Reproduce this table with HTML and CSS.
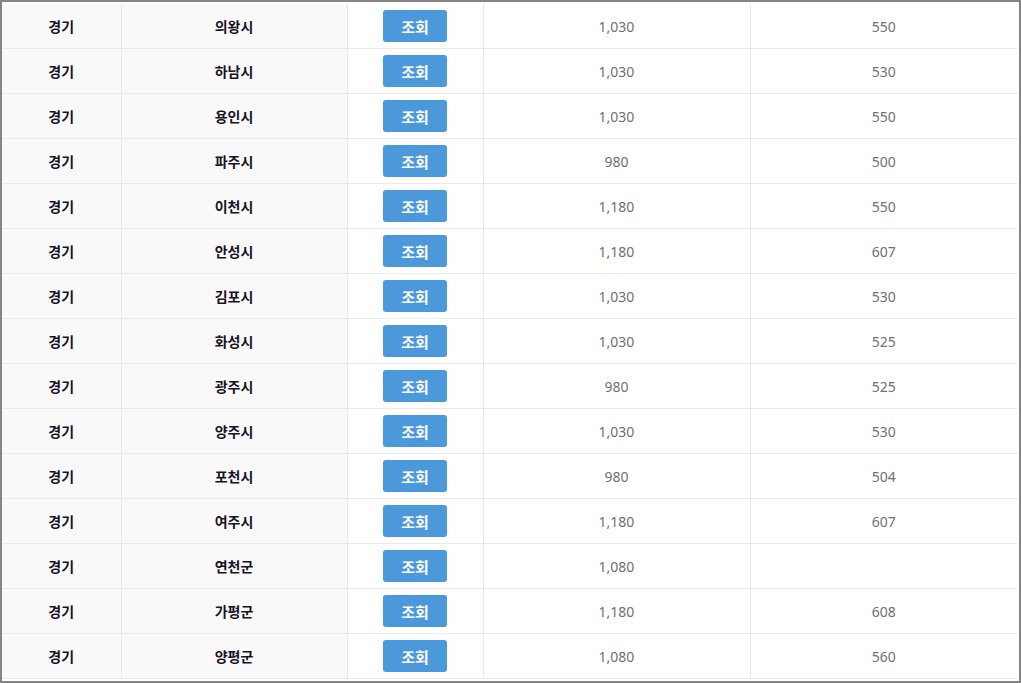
FILE: index.html
```html
<!DOCTYPE html>
<html lang="ko">
<head>
    <meta charset="UTF-8">
    <meta name="viewport" content="width=device-width, initial-scale=1.0">
    <title>지역별 요금 조회</title>
    <link rel="stylesheet" href="styles.css">
</head>
<body>
    <div class="frame">
        <table class="fee-table">
            <colgroup>
                <col class="col-area">
                <col class="col-city">
                <col class="col-btn">
                <col class="col-num">
                <col class="col-num2">
            </colgroup>
            <tbody>
                <tr><td class="area">경기</td><td class="city">의왕시</td><td><button class="lookup">조회</button></td><td class="num">1,030</td><td class="num">550</td></tr>
                <tr><td class="area">경기</td><td class="city">하남시</td><td><button class="lookup">조회</button></td><td class="num">1,030</td><td class="num">530</td></tr>
                <tr><td class="area">경기</td><td class="city">용인시</td><td><button class="lookup">조회</button></td><td class="num">1,030</td><td class="num">550</td></tr>
                <tr><td class="area">경기</td><td class="city">파주시</td><td><button class="lookup">조회</button></td><td class="num">980</td><td class="num">500</td></tr>
                <tr><td class="area">경기</td><td class="city">이천시</td><td><button class="lookup">조회</button></td><td class="num">1,180</td><td class="num">550</td></tr>
                <tr><td class="area">경기</td><td class="city">안성시</td><td><button class="lookup">조회</button></td><td class="num">1,180</td><td class="num">607</td></tr>
                <tr><td class="area">경기</td><td class="city">김포시</td><td><button class="lookup">조회</button></td><td class="num">1,030</td><td class="num">530</td></tr>
                <tr><td class="area">경기</td><td class="city">화성시</td><td><button class="lookup">조회</button></td><td class="num">1,030</td><td class="num">525</td></tr>
                <tr><td class="area">경기</td><td class="city">광주시</td><td><button class="lookup">조회</button></td><td class="num">980</td><td class="num">525</td></tr>
                <tr><td class="area">경기</td><td class="city">양주시</td><td><button class="lookup">조회</button></td><td class="num">1,030</td><td class="num">530</td></tr>
                <tr><td class="area">경기</td><td class="city">포천시</td><td><button class="lookup">조회</button></td><td class="num">980</td><td class="num">504</td></tr>
                <tr><td class="area">경기</td><td class="city">여주시</td><td><button class="lookup">조회</button></td><td class="num">1,180</td><td class="num">607</td></tr>
                <tr><td class="area">경기</td><td class="city">연천군</td><td><button class="lookup">조회</button></td><td class="num">1,080</td><td class="num"></td></tr>
                <tr><td class="area">경기</td><td class="city">가평군</td><td><button class="lookup">조회</button></td><td class="num">1,180</td><td class="num">608</td></tr>
                <tr><td class="area">경기</td><td class="city">양평군</td><td><button class="lookup">조회</button></td><td class="num">1,080</td><td class="num">560</td></tr>
            </tbody>
        </table>
    </div>
</body>
</html>
```

FILE: styles.css
```css
body {
    margin: 0;
    padding: 0;
    background: #ffffff;
    font-family: "Noto Sans CJK KR", "Noto Sans", sans-serif;
}

.frame {
    width: 1021px;
    height: 683px;
    box-sizing: border-box;
    border: 2px solid #858585;
    padding: 2px 2px 2px 0;
    overflow: hidden;
    background: #ffffff;
}

.fee-table {
    width: 1015px;
    table-layout: fixed;
    border-collapse: collapse;
}

.col-area { width: 119px; }
.col-city { width: 226px; }
.col-btn { width: 136px; }
.col-num { width: 267px; }
.col-num2 { width: 267px; }

.fee-table td {
    height: 44px;
    padding: 0;
    text-align: center;
    vertical-align: middle;
    border-bottom: 1px solid #e9e9e9;
    border-right: 1px solid #e9e9e9;
}

.fee-table td:last-child {
    border-right: none;
}

.area,
.city {
    background: #f9f9f9;
    font-size: 14px;
    font-weight: 700;
    color: #1a1126;
}

.num {
    font-family: "Noto Sans", "Liberation Sans", sans-serif;
    font-size: 14px;
    color: #707070;
}

.lookup {
    display: inline-block;
    width: 64px;
    height: 32px;
    padding: 0;
    border: none;
    border-radius: 3px;
    background: #4b98db;
    color: #ffffff;
    font-family: "Noto Sans CJK KR", sans-serif;
    font-size: 15px;
    font-weight: 700;
    cursor: pointer;
}
```
